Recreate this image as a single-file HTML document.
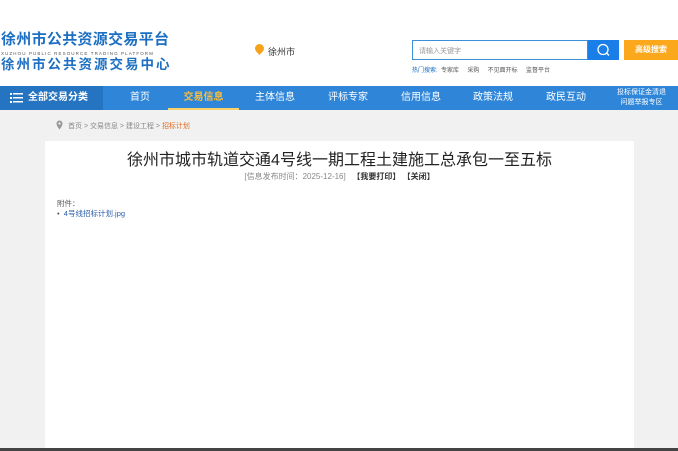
<!DOCTYPE html>
<html><head><meta charset="utf-8"><style>
*{margin:0;padding:0;box-sizing:border-box}
body{width:678px;height:451px;overflow:hidden;background:#f1f1f1;font-family:"Liberation Sans","Noto Sans CJK SC",sans-serif;position:relative}
.top{position:absolute;left:0;top:0;width:678px;height:20px;background:#fff}
.hdr{position:absolute;left:0;top:20px;width:678px;height:66px;background:#fff}
.l1{position:absolute;left:1px;top:11px;font-size:15px;line-height:18px;font-weight:bold;color:#1c6fc2;letter-spacing:0.3px;white-space:nowrap}
.l2{position:absolute;left:1px;top:31px;font-size:4.5px;line-height:6px;color:#555;letter-spacing:1.1px;white-space:nowrap}
.l3{position:absolute;left:1px;top:37px;font-size:13.5px;line-height:16px;font-weight:bold;color:#1c6fc2;letter-spacing:2px;white-space:nowrap}
.loc{position:absolute;left:268px;top:25px;font-size:9px;color:#333}
.pin{position:absolute;left:255px;top:24px;width:9px;height:9px;background:#f7a21b;border-radius:50% 50% 50% 0;transform:rotate(-45deg)}
.sb{position:absolute;left:412px;top:20px;width:176px;height:20px;border:1px solid #3a8fd6;background:#fff;font-size:7px;color:#999;padding:5px 6px}
.sbt{position:absolute;left:588px;top:20px;width:31px;height:20px;background:#1a7ee8}
.adv{position:absolute;left:624px;top:20px;width:54px;height:20px;background:#fba81c;color:#fff;font-size:8px;font-weight:bold;text-align:center;line-height:20px}
.hot{position:absolute;left:412px;top:45px;font-size:6px;color:#555;white-space:nowrap}
.hot b{color:#1c6fc2;font-weight:normal}
.nav{position:absolute;left:0;top:86px;width:678px;height:24px;background:#2f86d8}
.cat{position:absolute;left:0;top:0;width:103px;height:24px;background:#2474c2;color:#fff;font-size:10px;font-weight:bold;line-height:24px;padding-left:28px}
.ni{position:absolute;top:0;height:24px;line-height:24px;color:#fff;font-size:10px}
.act{color:#fbbf3a;font-weight:bold;border-bottom:2px solid #fbd267}
.crumb{position:absolute;left:68px;top:121px;font-size:7px;color:#888}
.crumb span{color:#e36c22}
.card{position:absolute;left:45px;top:141px;width:589px;height:307px;background:#fff}
.tt{position:absolute;left:0;top:5px;width:589px;text-align:center;font-size:16px;color:#222}
.meta{position:absolute;left:0;top:30px;width:589px;text-align:center;font-size:8px;color:#888}
.meta b{color:#333}
.att{position:absolute;left:12px;top:58px;font-size:7.5px;color:#555;line-height:10px}
.att a{color:#2a5ea8}
.bot{position:absolute;left:0;top:448px;width:678px;height:3px;background:#444}
</style></head><body>
<div class="top"></div>
<div class="hdr">
<div class="l1">徐州市公共资源交易平台</div>
<div class="l2">XUZHOU PUBLIC RESOURCE TRADING PLATFORM</div>
<div class="l3">徐州市公共资源交易中心</div>
<div class="pin"></div><div class="loc">徐州市</div>
<div class="sb">请输入关键字</div>
<div class="sbt"><svg width="31" height="20"><circle cx="15" cy="9.5" r="5" fill="none" stroke="#fff" stroke-width="1.3"/><line x1="18.5" y1="13" x2="21" y2="15.5" stroke="#fff" stroke-width="1.3"/></svg></div>
<div class="adv">高级搜索</div>
<div class="hot"><b>热门搜索:</b> &nbsp;专家库 &nbsp;&nbsp;&nbsp;&nbsp;采购 &nbsp;&nbsp;&nbsp;&nbsp;不见面开标 &nbsp;&nbsp;&nbsp;&nbsp;监督平台</div>
</div>
<div class="nav">
<div class="cat"><svg style="position:absolute;left:10px;top:7px" width="13" height="10"><g fill="#fff"><rect x="0" y="0" width="2" height="2"/><rect x="0" y="4" width="2" height="2"/><rect x="0" y="8" width="2" height="2"/><rect x="3" y="0" width="10" height="1.5"/><rect x="3" y="4" width="10" height="1.5"/><rect x="3" y="8" width="10" height="1.5"/></g></svg>全部交易分类</div>
<div class="ni" style="left:130px">首页</div>
<div class="ni act" style="left:168px;width:71px;text-align:center">交易信息</div>
<div class="ni" style="left:255px">主体信息</div>
<div class="ni" style="left:328px">评标专家</div>
<div class="ni" style="left:401px">信用信息</div>
<div class="ni" style="left:473px">政策法规</div>
<div class="ni" style="left:546px">政民互动</div>
<div style="position:absolute;left:617px;top:2px;font-size:7px;color:#fff;line-height:10px;text-align:center">投标保证金清退<br>问题举报专区</div>
</div>
<div class="crumb">首页 &gt; 交易信息 &gt; 建设工程 &gt; <span>招标计划</span></div>
<svg style="position:absolute;left:56px;top:120px" width="7" height="10"><path d="M3.5 0.5a3 3 0 0 1 3 3c0 2.5-3 6-3 6s-3-3.5-3-6a3 3 0 0 1 3-3z" fill="#999"/><circle cx="3.5" cy="3.5" r="1.1" fill="#f1f1f1"/></svg>
<div class="card">
<div class="tt">徐州市城市轨道交通4号线一期工程土建施工总承包一至五标</div>
<div class="meta">[信息发布时间：2025-12-16] &nbsp;&nbsp;<b>【我要打印】 【关闭】</b></div>
<div class="att">附件：<br>• &nbsp;<a>4号线招标计划.jpg</a></div>
</div>
<div class="bot"></div>
</body></html>
